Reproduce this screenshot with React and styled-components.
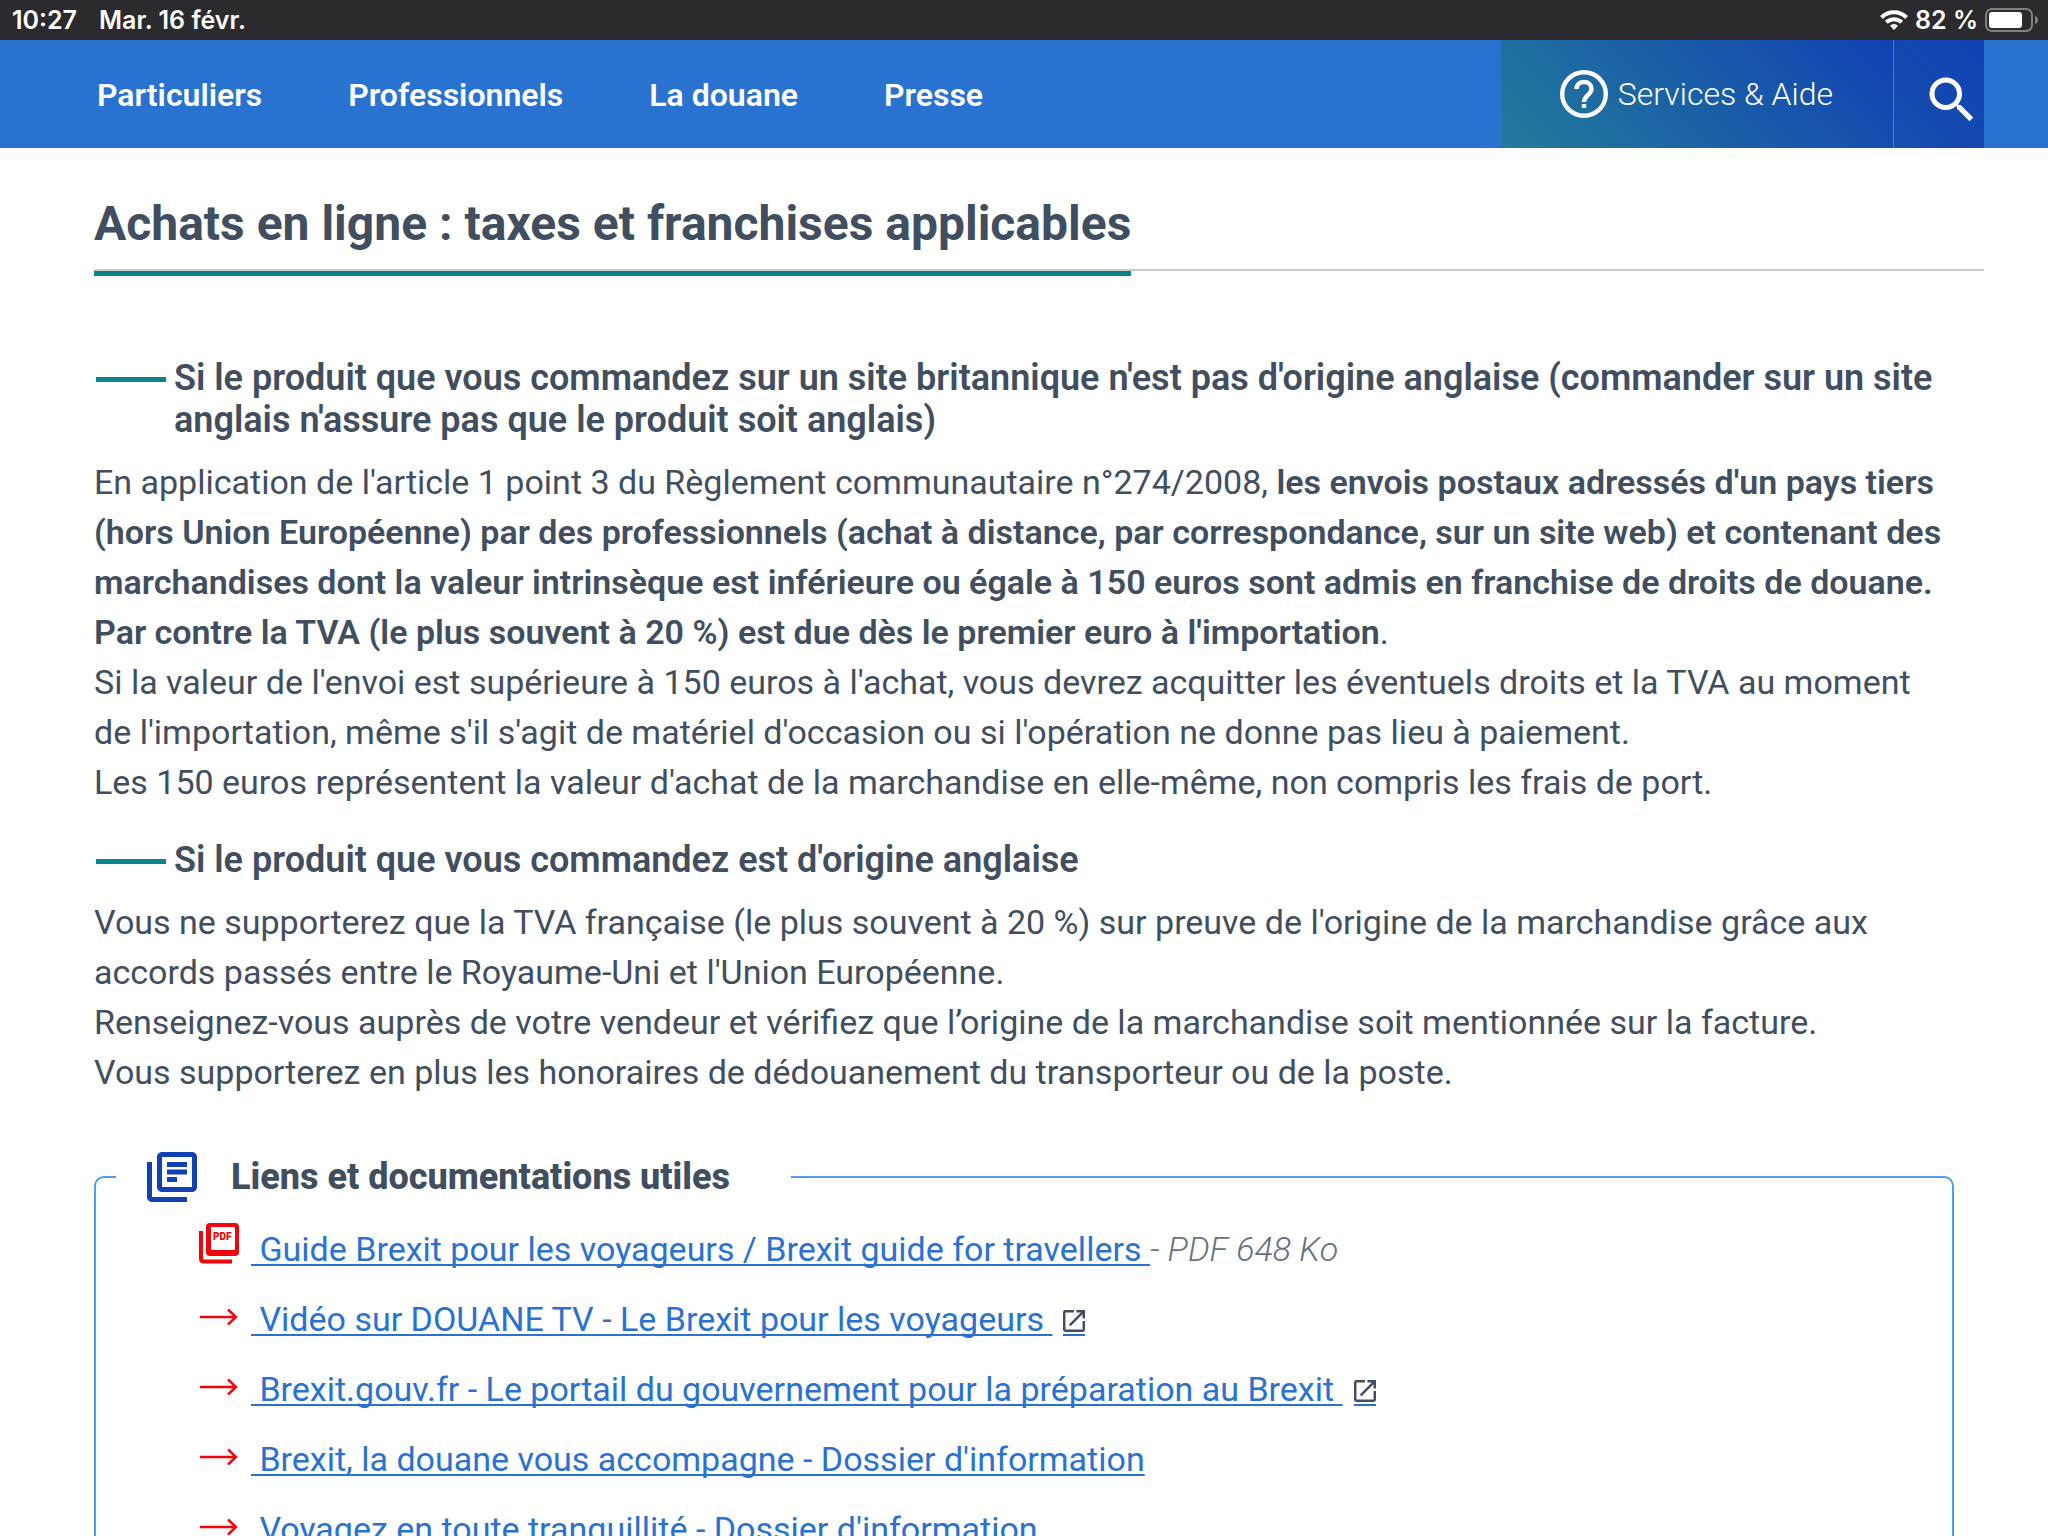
import React from "react";
import styled, { createGlobalStyle } from "styled-components";
import { MdOutlineLibraryBooks, MdOpenInNew, MdSearch } from "react-icons/md";

const colors = {
    text: "#414e60",
    blue: "#2a72d0",
    teal: "#0c8588",
    red: "#f3040b",
    border: "#4f9bee",
};

const GlobalStyle = createGlobalStyle`
    * {
        box-sizing: border-box;
    }
    html, body, #root {
        height: 100%;
    }
    body {
        margin: 0;
        overflow: hidden;
        background: #fff;
        color: ${colors.text};
        font-family: Roboto, "Liberation Sans", sans-serif;
        font-size: 34px;
        line-height: 50px;
    }
`;

const StyledStatusBar = styled.div`
    display: flex;
    justify-content: space-between;
    align-items: center;
    height: 40px;
    padding: 0 10px 0 12px;
    background: #2b2a2f;
    color: #fff;
    font: 600 25px/40px Inter, "Liberation Sans", sans-serif;
`;

const StyledStatusGroup = styled.div`
    display: flex;
    align-items: center;
    gap: ${props => props.$gap}px;
`;

const StyledHeader = styled.header`
    display: flex;
    justify-content: space-between;
    height: 108px;
    padding: 0 64px 0 97px;
    background: ${colors.blue};
`;

const StyledNav = styled.nav`
    display: flex;
    align-items: center;
    gap: 86px;
    padding-top: 2px;
`;

const StyledNavLink = styled.a`
    color: #fff;
    font-size: 32px;
    font-weight: 600;
    text-decoration: none;
`;

const StyledTools = styled.div`
    display: flex;
`;

const StyledHelpLink = styled.a`
    display: flex;
    align-items: center;
    gap: 10px;
    padding: 0 60px 0 59px;
    border-right: 1px solid #4a83bb;
    background: linear-gradient(45deg, #237b9b, #1141b3);
    color: #fff;
    font-size: 32px;
    font-weight: 300;
    text-decoration: none;
`;

const StyledSearchButton = styled.button`
    display: flex;
    align-items: center;
    justify-content: center;
    width: 90px;
    padding: 12px 0 0 26px;
    border: 0;
    background: linear-gradient(45deg, #164fad, #1141b3);
    color: #fff;
`;

const StyledMain = styled.main`
    padding: 42px 64px 0 94px;
`;

const StyledTitleBar = styled.div`
    display: flex;
    margin-bottom: 86px;
    border-bottom: 2px solid #c6c9cd;
`;

const StyledTitle = styled.h1`
    margin: 0 0 -7px;
    padding-bottom: 13px;
    border-bottom: 5px solid ${colors.teal};
    font-size: 48px;
    font-weight: 700;
    line-height: 68px;
`;

const StyledArticle = styled.article`
    padding-right: 30px;
`;

const StyledSubheading = styled.h2`
    display: flex;
    gap: 8px;
    margin: 0;
    padding-left: 2px;
    font-size: 36px;
    font-weight: 600;
    line-height: 42px;
    &::before {
        content: "";
        flex: none;
        width: 70px;
        height: 5px;
        margin-top: 20px;
        background: ${colors.teal};
    }
`;

const StyledParagraph = styled.p`
    margin: 16px 0 32px;
    & b {
        font-weight: 600;
    }
`;

const StyledLinksBox = styled.fieldset`
    margin: 50px 0 0;
    padding: 0 20px 60px;
    border: 2px solid ${colors.border};
    border-radius: 10px;
`;

const StyledLegend = styled.legend`
    display: flex;
    align-items: center;
    gap: 29px;
    padding: 0 61px 0 26px;
    font-size: 36px;
    font-weight: 800;
    line-height: 60px;
    & > svg {
        color: #1141b3;
    }
`;

const StyledLinkList = styled.ul`
    margin: 0;
    padding: 7px 0 0 83px;
    list-style: none;
`;

const StyledLinkItem = styled.li`
    display: grid;
    grid-template-columns: 52px auto;
    height: 70px;
    line-height: 70px;
`;

const StyledLink = styled.a`
    color: ${colors.blue};
    text-decoration: underline;
    text-decoration-thickness: 2px;
    text-decoration-skip-ink: none;
    text-underline-offset: 3px;
    white-space: pre;
`;

const StyledOpenIcon = styled(MdOpenInNew)`
    width: 22px;
    height: 26px;
    margin-left: 11px;
    padding-bottom: 2px;
    border-bottom: 2px solid ${colors.blue};
    color: ${colors.text};
    vertical-align: -5px;
`;

const StyledFileInfo = styled.em`
    color: #657182;
    font-weight: 300;
`;

const StyledMarker = styled.svg`
    margin-top: ${props => props.$top}px;
`;

const WifiIcon = () => (
    <svg width="28" height="20" viewBox="0 0 28 20" fill="none" stroke="#fff" strokeWidth="4">
        <path d="M1.5 7.5a17.5 17.5 0 0 1 25 0" />
        <path d="M6.3 12.3a11 11 0 0 1 15.4 0" />
        <path d="M14 20l-4-4.2a5.6 5.6 0 0 1 8 0z" fill="#fff" stroke="none" />
    </svg>
);

const BatteryIcon = () => (
    <svg width="53" height="24" viewBox="0 0 53 24">
        <rect x="1" y="1" width="46" height="22" rx="6" fill="none" stroke="#808084" strokeWidth="2" />
        <rect x="4" y="4" width="33" height="16" rx="3" fill="#fff" />
        <path d="M50 8c4 1 4 7 0 8z" fill="#808084" />
    </svg>
);

const HelpIcon = () => (
    <svg width="48" height="48" viewBox="0 0 48 48" fill="none" stroke="#fff" strokeWidth="4.4">
        <circle cx="24" cy="24" r="21.8" />
        <path d="M16.500 19c0-4.500 3.200-7 7.500-7s7.500 2.700 7.500 7c0 5.500-7.500 7-7.500 13" />
        <path d="M24 34v4" />
    </svg>
);

const PdfIcon = () => (
    <StyledMarker $top={9} width="40" height="42" viewBox="0 0 40 42">
        <path d="M2 8v27.500q0 3 3 3h28" fill="none" stroke={colors.red} strokeWidth="4" />
        <path fillRule="evenodd" fill={colors.red} d="M11 0h25q4 0 4 4v25q0 4-4 4H11q-4 0-4-4V4q0-4 4-4zM13 4q-1 0-1 1v21q0 1 1 1h22q1 0 1-1V5q0-1-1-1z" />
        <text x="14" y="17" fill={colors.red} fontSize="10" fontWeight="900">PDF</text>
    </StyledMarker>
);

const ArrowIcon = () => (
    <StyledMarker $top={24} width="40" height="18" viewBox="0 0 40 18" fill="none" stroke={colors.red} strokeWidth="2.4">
        <path d="M1 9h36M29 1.500l8 7.500-8 7.500" />
    </StyledMarker>
);

const navItems = ["Particuliers", "Professionnels", "La douane", "Presse"];

const links = [
    { name: " Guide Brexit pour les voyageurs / Brexit guide for travellers ", info: "- PDF 648 Ko" },
    { name: " Vidéo sur DOUANE TV - Le Brexit pour les voyageurs ", external: true },
    { name: " Brexit.gouv.fr - Le portail du gouvernement pour la préparation au Brexit ", external: true },
    { name: " Brexit, la douane vous accompagne - Dossier d'information" },
    { name: " Voyagez en toute tranquillité - Dossier d'information" },
];

const LinkItem = ({ item }) => (
    <StyledLinkItem>
        {item.info ? <PdfIcon /> : <ArrowIcon />}
        <div>
            <StyledLink href="#">
                {item.name}
                {item.external && <StyledOpenIcon viewBox="3 3 18 18" />}
            </StyledLink>
            {item.info && <StyledFileInfo>{item.info}</StyledFileInfo>}
        </div>
    </StyledLinkItem>
);

const App = () => (
    <>
        <GlobalStyle />
        <StyledStatusBar>
            <StyledStatusGroup $gap={22}>
                <span>10:27</span>
                <span>Mar. 16 févr.</span>
            </StyledStatusGroup>
            <StyledStatusGroup $gap={7}>
                <WifiIcon />
                <span>82 %</span>
                <BatteryIcon />
            </StyledStatusGroup>
        </StyledStatusBar>
        <StyledHeader>
            <StyledNav>
                {navItems.map(name => <StyledNavLink key={name} href="#">{name}</StyledNavLink>)}
            </StyledNav>
            <StyledTools>
                <StyledHelpLink href="#"><HelpIcon /> Services &amp; Aide</StyledHelpLink>
                <StyledSearchButton aria-label="Rechercher"><MdSearch size={60} /></StyledSearchButton>
            </StyledTools>
        </StyledHeader>
        <StyledMain>
            <StyledTitleBar>
                <StyledTitle>Achats en ligne : taxes et franchises applicables</StyledTitle>
            </StyledTitleBar>
            <StyledArticle>
                <StyledSubheading>
                    Si le produit que vous commandez sur un site britannique n'est pas d'origine anglaise (commander sur un site anglais n'assure pas que le produit soit anglais)
                </StyledSubheading>
                <StyledParagraph>
                    En application de l'article 1 point 3 du Règlement communautaire n°274/2008, <b>les envois postaux adressés d'un pays tiers (hors Union Européenne) par des professionnels (achat à distance, par correspondance, sur un site web) et contenant des marchandises dont la valeur intrinsèque est inférieure ou égale à 150 euros sont admis en franchise de droits de douane. Par contre la TVA (le plus souvent à 20 %) est due dès le premier euro à l'importation</b>.<br />
                    Si la valeur de l'envoi est supérieure à 150 euros à l'achat, vous devrez acquitter les éventuels droits et la TVA au moment de l'importation, même s'il s'agit de matériel d'occasion ou si l'opération ne donne pas lieu à paiement.<br />
                    Les 150 euros représentent la valeur d'achat de la marchandise en elle-même, non compris les frais de port.
                </StyledParagraph>
                <StyledSubheading>Si le produit que vous commandez est d'origine anglaise</StyledSubheading>
                <StyledParagraph>
                    Vous ne supporterez que la TVA française (le plus souvent à 20 %) sur preuve de l'origine de la marchandise grâce aux accords passés entre le Royaume-Uni et l'Union Européenne.<br />
                    Renseignez-vous auprès de votre vendeur et vérifiez que l’origine de la marchandise soit mentionnée sur la facture.<br />
                    Vous supporterez en plus les honoraires de dédouanement du transporteur ou de la poste.
                </StyledParagraph>
                <StyledLinksBox>
                    <StyledLegend><MdOutlineLibraryBooks size={60} /> Liens et documentations utiles</StyledLegend>
                    <StyledLinkList>
                        {links.map(item => <LinkItem key={item.name} item={item} />)}
                    </StyledLinkList>
                </StyledLinksBox>
            </StyledArticle>
        </StyledMain>
    </>
);

export default App;
